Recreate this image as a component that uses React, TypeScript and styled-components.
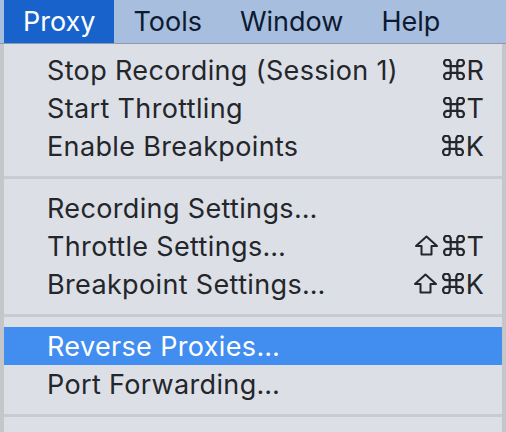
import React from "react";
import styled, { createGlobalStyle } from "styled-components";

const Global = createGlobalStyle`
  html, body { margin: 0; padding: 0; }
  body {
    width: 506px;
    height: 432px;
    overflow: hidden;
    background: #c4c6c9;
    font-family: Inter, "Noto Sans", "DejaVu Sans", sans-serif;
    -webkit-font-smoothing: antialiased;
  }
`;

const Screen = styled.div`
  width: 506px;
  height: 432px;
  display: flex;
  flex-direction: column;
  overflow: hidden;
`;

const MenuBar = styled.div`
  height: 43px;
  flex: none;
  display: flex;
  align-items: stretch;
  padding-left: 4px;
  background: #a7bedf;
  border-bottom: 1px solid #8f9aa8;
`;

const BarItem = styled.div<{ $active?: boolean }>`
  display: flex;
  align-items: center;
  padding: 0 19px;
  font-size: 27px;
  color: ${(p) => (p.$active ? "#ffffff" : "#0d1a30")};
  background: ${(p) => (p.$active ? "#1763cb" : "transparent")};
`;

const Body = styled.div`
  flex: 1;
  display: flex;
  padding: 0 4px;
`;

const Panel = styled.div`
  flex: 1;
  background: #dcdfe5;
  padding-top: 7px;
  display: flex;
  flex-direction: column;
`;

const Row = styled.div<{ $selected?: boolean }>`
  height: 38px;
  flex: none;
  display: flex;
  align-items: center;
  justify-content: space-between;
  padding: 0 18px 0 43px;
  font-size: 27px;
  letter-spacing: 0.35px;
  color: ${(p) => (p.$selected ? "#ffffff" : "#23262b")};
  background: ${(p) => (p.$selected ? "#418df0" : "transparent")};
`;

const Shortcut = styled.span`
  display: flex;
  align-items: center;
  letter-spacing: 0;
`;

const KeyIcon = styled.svg<{ $gap: number }>`
  display: block;
  margin-right: ${(p) => p.$gap}px;
  margin-top: -2px;
  fill: none;
  stroke: currentColor;
  stroke-linecap: round;
  stroke-linejoin: round;
`;

const Separator = styled.div`
  height: 24px;
  flex: none;
  display: flex;
  align-items: center;
  &::after {
    content: "";
    flex: 1;
    height: 3px;
    background: #c8cbd1;
  }
`;

const ShiftIcon = () => (
  <KeyIcon $gap={5} width={23} height={21} viewBox="0 0 23 21" strokeWidth={2}>
    <path d="M11.5 1.5 L22 11 L16.5 11 L16.5 19.5 L6.5 19.5 L6.5 11 L1 11 Z" />
  </KeyIcon>
);

const CmdIcon = () => (
  <KeyIcon $gap={2} width={22} height={21} viewBox="2.5 2.5 19 19" strokeWidth={2}>
    <path d="M15 6v12a3 3 0 1 0 3-3H6a3 3 0 1 0 3 3V6a3 3 0 1 0-3 3h12a3 3 0 1 0-3-3" />
  </KeyIcon>
);

type Item = { label: string; shift?: boolean; key?: string };

const groups: Item[][] = [
  [
    { label: "Stop Recording (Session 1)", key: "R" },
    { label: "Start Throttling", key: "T" },
    { label: "Enable Breakpoints", key: "K" },
  ],
  [
    { label: "Recording Settings…" },
    { label: "Throttle Settings…", shift: true, key: "T" },
    { label: "Breakpoint Settings…", shift: true, key: "K" },
  ],
  [{ label: "Reverse Proxies…" }, { label: "Port Forwarding…" }],
];

export default function App() {
  return (
    <>
      <Global />
      <Screen>
        <MenuBar>
          <BarItem $active>Proxy</BarItem>
          <BarItem>Tools</BarItem>
          <BarItem>Window</BarItem>
          <BarItem>Help</BarItem>
        </MenuBar>
        <Body>
          <Panel>
            {groups.map((g, gi) => (
              <React.Fragment key={gi}>
                {g.map((it) => (
                  <Row key={it.label} $selected={it.label.startsWith("Reverse")}>
                    <span>{it.label}</span>
                    {it.key && (
                      <Shortcut>
                        {it.shift && <ShiftIcon />}
                        <CmdIcon />
                        <span>{it.key}</span>
                      </Shortcut>
                    )}
                  </Row>
                ))}
                <Separator />
              </React.Fragment>
            ))}
          </Panel>
        </Body>
      </Screen>
    </>
  );
}
